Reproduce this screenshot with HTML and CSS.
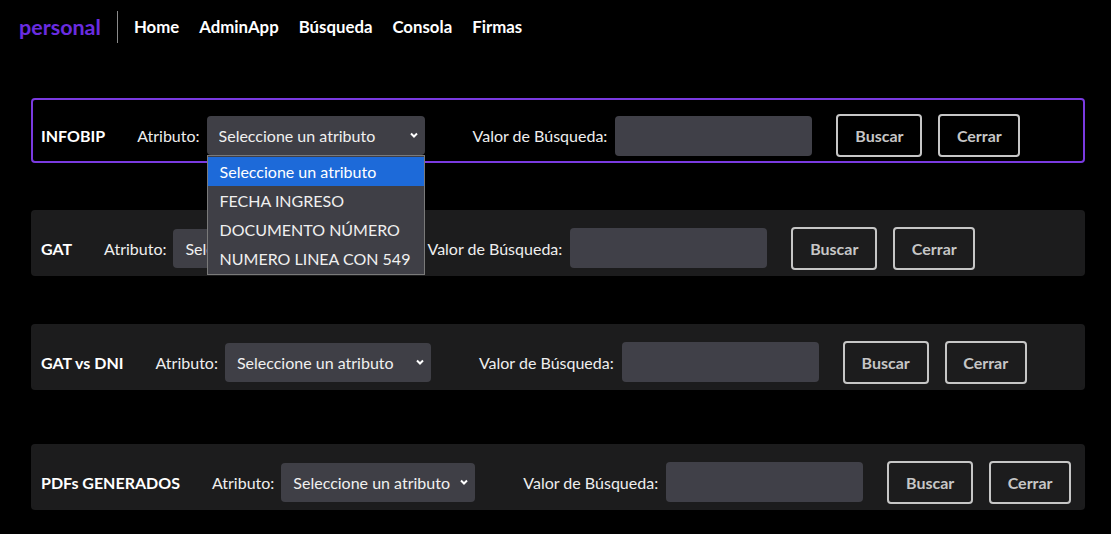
FILE: index.html
```html
<!DOCTYPE html>
<html lang="es">
<head>
<meta charset="utf-8">
<title>personal</title>
<link rel="stylesheet" href="styles.css">
</head>
<body>
<nav class="nav">
  <a class="brand" href="#">personal</a>
  <span class="sep"></span>
  <a class="link" href="#">Home</a>
  <a class="link" href="#">AdminApp</a>
  <a class="link" href="#">Búsqueda</a>
  <a class="link" href="#">Consola</a>
  <a class="link" href="#">Firmas</a>
</nav>
<main class="main">
  <section class="card card-active">
    <span class="title">INFOBIP</span>
    <label class="lbl lbl-attr">Atributo:</label>
    <div class="select-wrap sel-w1">
      <select class="select"><option>Seleccione un atributo</option></select>
      <svg class="chev" viewBox="0 0 10 10" width="10" height="10"><path d="M2 3.5 L5 6.5 L8 3.5" fill="none" stroke="#fff" stroke-width="2"/></svg>
      <ul class="dropdown">
        <li class="opt opt-sel">Seleccione un atributo</li>
        <li class="opt">FECHA INGRESO</li>
        <li class="opt">DOCUMENTO NÚMERO</li>
        <li class="opt">NUMERO LINEA CON 549</li>
      </ul>
    </div>
    <label class="lbl lbl-val">Valor de Búsqueda:</label>
    <input class="input" type="text">
    <button class="btn btn-buscar">Buscar</button>
    <button class="btn btn-cerrar">Cerrar</button>
  </section>

  <section class="card">
    <span class="title">GAT</span>
    <label class="lbl lbl-attr">Atributo:</label>
    <div class="select-wrap sel-w2">
      <select class="select"><option>Seleccione un atributo</option></select>
      <svg class="chev" viewBox="0 0 10 10" width="10" height="10"><path d="M2 3.5 L5 6.5 L8 3.5" fill="none" stroke="#fff" stroke-width="2"/></svg>
    </div>
    <label class="lbl lbl-val">Valor de Búsqueda:</label>
    <input class="input" type="text">
    <button class="btn btn-buscar">Buscar</button>
    <button class="btn btn-cerrar">Cerrar</button>
  </section>

  <section class="card">
    <span class="title">GAT vs DNI</span>
    <label class="lbl lbl-attr">Atributo:</label>
    <div class="select-wrap sel-w2">
      <select class="select"><option>Seleccione un atributo</option></select>
      <svg class="chev" viewBox="0 0 10 10" width="10" height="10"><path d="M2 3.5 L5 6.5 L8 3.5" fill="none" stroke="#fff" stroke-width="2"/></svg>
    </div>
    <label class="lbl lbl-val">Valor de Búsqueda:</label>
    <input class="input" type="text">
    <button class="btn btn-buscar">Buscar</button>
    <button class="btn btn-cerrar">Cerrar</button>
  </section>

  <section class="card card-last">
    <span class="title">PDFs GENERADOS</span>
    <label class="lbl lbl-attr">Atributo:</label>
    <div class="select-wrap sel-w3">
      <select class="select"><option>Seleccione un atributo</option></select>
      <svg class="chev" viewBox="0 0 10 10" width="10" height="10"><path d="M2 3.5 L5 6.5 L8 3.5" fill="none" stroke="#fff" stroke-width="2"/></svg>
    </div>
    <label class="lbl lbl-val">Valor de Búsqueda:</label>
    <input class="input" type="text">
    <button class="btn btn-buscar">Buscar</button>
    <button class="btn btn-cerrar">Cerrar</button>
  </section>
</main>
</body>
</html>
```
FILE: styles.css
```css
* { box-sizing: border-box; }
html, body { margin: 0; padding: 0; background: #000; }
body {
  font-family: Lato, "Open Sans", sans-serif;
  font-size: 16px;
  color: #fff;
  width: 1111px;
  height: 534px;
  overflow: hidden;
}
.nav {
  display: flex;
  align-items: center;
  height: 53px;
  padding: 0 0 0 19px;
}
.brand {
  color: #6a2ce0;
  font-weight: 700;
  font-size: 21.5px;
  text-decoration: none;
  margin-right: 16px;
}
.sep {
  width: 1px;
  height: 32px;
  background: #8a8a8a;
  margin-right: 16px;
}
.link {
  color: #fff;
  font-weight: 700;
  font-size: 16.8px;
  text-decoration: none;
  margin-right: 20px;
}
.main {
  padding: 45px 26px 0 31px;
}
.card {
  display: flex;
  align-items: center;
  background: #1c1c1d;
  border: 2px solid #1c1c1d;
  border-radius: 4px;
  padding: 15px 8px 5px;
  height: 66px;
  margin-bottom: 48px;
}
.card-active {
  background: #000;
  border-color: #7a3ae0;
  height: 65px;
  margin-bottom: 47px;
}
.card-last { margin-top: 54px; }
.title {
  font-weight: 700;
  font-size: 16px;
  margin-right: 32px;
}
.lbl {
  color: #eee;
  margin-right: 7px;
}
.select-wrap {
  position: relative;
  height: 39px;
  margin-right: 48px;
}
.sel-w1 { width: 218px; }
.sel-w2 { width: 206px; }
.sel-w3 { width: 194px; }
.select {
  appearance: none;
  -webkit-appearance: none;
  width: 100%;
  height: 39px;
  background: #3f3f46;
  color: #f0f0f0;
  border: none;
  border-radius: 4px;
  font-family: inherit;
  font-size: 16px;
  padding: 0 12px;
}
.chev {
  position: absolute;
  right: 6px;
  top: 14px;
}
.dropdown {
  position: absolute;
  left: 0;
  top: 39px;
  width: 218px;
  margin: 0;
  padding: 1px 0;
  list-style: none;
  background: #3f3f46;
  border: 1px solid #7a7a7a;
  z-index: 10;
}
.opt {
  height: 29px;
  line-height: 29px;
  padding-left: 12px;
  color: #f0f0f0;
  font-size: 16px;
}
.opt-sel { background: #1d6ad9; color: #fff; }
.input {
  width: 197px;
  height: 40px;
  background: #404048;
  border: none;
  border-radius: 4px;
  margin-left: 1px;
  margin-right: 24px;
}
.btn {
  height: 43px;
  background: transparent;
  border: 2px solid #c6c6c6;
  border-radius: 4px;
  color: #c6c6c6;
  font-family: inherit;
  font-weight: 700;
  font-size: 16px;
  padding: 0;
}
.btn-buscar { width: 86px; margin-right: 16px; }
.btn-cerrar { width: 82px; }
```
